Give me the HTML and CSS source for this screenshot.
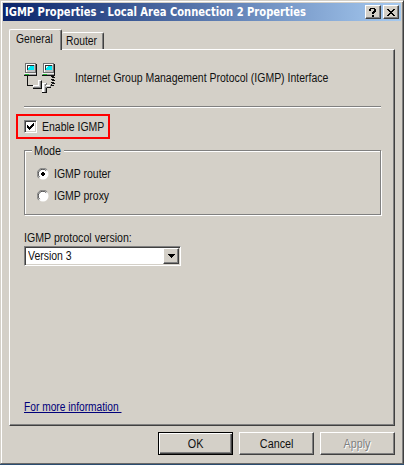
FILE: index.html
```html
<!DOCTYPE html>
<html lang="en">
<head>
<meta charset="utf-8">
<title>IGMP Properties</title>
<link rel="stylesheet" href="styles.css">
</head>
<body>
<div class="window">
  <header class="titlebar">
    <h1><span class="text t-title">IGMP Properties - Local Area Connection 2 Properties</span></h1>
    <button class="caption" aria-label="Help"><svg width="8" height="9" viewBox="0 0 8 9" shape-rendering="crispEdges"><path d="M1 0h5v1h1v3h-1v1h-1v1h-2v-2h1v-1h1v-2h-3v2h-2v-2h1zM3 7h2v2h-2z"/></svg></button>
    <button class="caption" aria-label="Close"><svg width="8" height="7" viewBox="0 0 8 7" shape-rendering="crispEdges"><path d="M0 0h2v1h1v1h2v-1h1v-1h2v1h-1v1h-1v1h-1v1h1v1h1v1h1v1h-2v-1h-1v-1h-2v1h-1v1h-2v-1h1v-1h1v-1h1v-1h-1v-1h-1v-1h-1z"/></svg></button>
  </header>
  <nav class="tabs">
    <div class="tab active"><span class="text t-tab">General</span></div>
    <div class="tab"><span class="text t-tab">Router</span></div>
  </nav>
  <main class="panel">
    <div class="intro">
      <svg width="32" height="32" viewBox="0 0 32 32" shape-rendering="crispEdges">
        <defs>
          <g id="pc">
            <path fill="#707070" d="M1 0h11v10H1z"/>
            <path fill="#fff" d="M2 1h9v8H2z"/>
            <path fill="#c0c0c0" d="M3 2h8v7H3z"/>
            <path fill="#333" d="M3 2h7v1H4v4H3z"/>
            <path fill="#111" d="M12 1h1v9h-1z"/>
            <path fill="#00e8f4" d="M4 3h6v4H4z"/>
            <path fill="#d8ffff" d="M4 3h2v1H5v1H4z"/>
            <path fill="#eee" d="M0 10h12v1H0z"/>
            <path fill="#999" d="M0 11h13v1H0z"/>
            <path fill="#20b030" d="M1 11h4v1H1z"/>
            <path fill="#111" d="M0 12h13v1H0zM12 10h1v3h-1z"/>
          </g>
        </defs>
        <use href="#pc"/><use href="#pc" x="18"/>
        <path fill="#111" d="M3 13h1v9h5v1H3z"/>
        <path fill="#111" d="M28 13h2v1h1v1h-3v1h2v1h1v1h-3v1h2v1h1v1h-3v1h2v1h-4v-1h1v-1h1v-1h-1v-1h1v-2h-1v-1h1v-2h-1v-1h1z"/>
        <path fill="#808080" d="M14 17h4v9h-9v-4h5z"/>
        <path fill="#fff" d="M14 17h3v1h-2v5h-5v1H9v-2h5z"/>
        <path fill="#c8c8c8" d="M10 23h6v1h-6zM15 18h1v5h-1z"/>
        <path fill="#111" d="M9 25h9v1H9zM17 18h1v8h-1z"/>
        <path fill="#808080" d="M19 20h4v2h4v3h-4v5h-4z"/>
        <path fill="#fff" d="M18 20h4v1h-2v8h-2zM22 22h4v1h-4z"/>
        <path fill="#c8c8c8" d="M20 21h1v8h-1zM21 23h5v1h-5z"/>
        <path fill="#111" d="M23 24h4v1h-4zM22 25h1v5h-5v-1h4z"/>
      </svg>
      <span class="text t-intro">Internet Group Management Protocol (IGMP) Interface</span>
    </div>
    <hr>
    <label class="enable">
      <span class="checkbox"><svg width="7" height="7" viewBox="0 0 7 7" shape-rendering="crispEdges"><path d="M0 2h1v1h1v1h1v-1h1v-1h1v-1h1v-1h1v3h-1v1h-1v1h-1v1h-1v1h-1v-1h-1v-1h-1z"/></svg></span>
      <span class="text">Enable IGMP</span>
    </label>
    <fieldset class="mode">
      <legend><span class="text t-mode">Mode</span></legend>
      <label class="option"><svg width="12" height="12" viewBox="0 0 12 12"><circle cx="6" cy="6" r="5.5" fill="#fff"/><path d="M1.8 10.2A5.5 5.5 0 0 1 10.2 1.8" fill="none" stroke="#808080"/><path d="M2.6 9.2A4.6 4.6 0 0 1 9.2 2.6" fill="none" stroke="#404040"/><path d="M5 4h2v1h1v2h-1v1h-2v-1h-1v-2h1z" shape-rendering="crispEdges"/></svg><span class="text">IGMP router</span></label>
      <label class="option"><svg width="12" height="12" viewBox="0 0 12 12"><circle cx="6" cy="6" r="5.5" fill="#fff"/><path d="M1.8 10.2A5.5 5.5 0 0 1 10.2 1.8" fill="none" stroke="#808080"/><path d="M2.6 9.2A4.6 4.6 0 0 1 9.2 2.6" fill="none" stroke="#404040"/></svg><span class="text">IGMP proxy</span></label>
    </fieldset>
    <div class="version"><span class="text t-version">IGMP protocol version:</span></div>
    <div class="combo"><span class="text">Version 3</span><span class="arrow"><svg width="7" height="4" viewBox="0 0 7 4" shape-rendering="crispEdges"><path d="M0 0h7v1h-1v1h-1v1h-1v1h-1v-1h-1v-1h-1v-1h-1z"/></svg></span></div>
    <a class="more"><span class="text t-more">For more information&nbsp;</span></a>
  </main>
  <footer class="actions">
    <button class="btn default"><span class="text t-btn">OK</span></button>
    <button class="btn"><span class="text t-btn">Cancel</span></button>
    <button class="btn disabled"><span class="text t-btn">Apply</span></button>
  </footer>
</div>
</body>
</html>
```
FILE: styles.css
```css
* { box-sizing: border-box; }
body { margin: 0; background: #2b4d72; font: 12px/14px "Liberation Sans", Arial, sans-serif; color: #111; }
svg { display: block; flex: none; }
button { font: inherit; color: inherit; border-radius: 0; padding: 0; margin: 0; }

/* Condensed system lettering */
.text { display: inline-block; white-space: nowrap; transform: scaleX(.873); transform-origin: 0 50%; }
.t-title { transform: scaleX(.953); }
.t-tab { transform: scaleX(.86); }
.t-mode { transform: scaleX(.9); }
.t-version { transform: scaleX(.885); }
.t-more { transform: scaleX(.85); text-decoration: underline; }
.t-btn { transform: scaleX(.9); transform-origin: 50% 50%; }

.window { width: 404px; height: 464px; background: #d4d0c8; border: 1px solid #d4d0c8; border-right-color: #404040; border-bottom-color: #686868; box-shadow: inset 1px 1px #fff, inset -1px 0 #808080; padding: 2px; display: flex; flex-direction: column; }
.titlebar { height: 18px; flex: none; background: linear-gradient(90deg, #0a246a, #a6caf0); display: flex; align-items: center; gap: 2px; padding: 0 2px; }
.titlebar h1 { flex: 1; margin: 0; color: #fff; font: bold 11.65px/18px "DejaVu Sans Condensed", "DejaVu Sans", sans-serif; }
.caption, .arrow { background: #d4d0c8; border: 1px solid; border-color: #fff #404040 #404040 #fff; box-shadow: inset -1px -1px #808080; display: flex; flex: none; align-items: center; justify-content: center; }
.caption { width: 16px; height: 14px; }
.tabs { display: flex; align-items: flex-end; height: 21px; margin: 8px 0 0 6px; flex: none; }
.tab { height: 18px; width: 42px; border: 1px solid #fff; border-right: 1px solid #404040; border-bottom: 0; border-left: 0; box-shadow: inset -1px 0 #808080; border-radius: 2px 2px 0 0; padding: 1px 0 0 4px; }
.tab.active { position: relative; z-index: 1; height: 21px; width: 53px; border-left: 1px solid #fff; background: #d4d0c8; padding: 2px 0 0 6px; }
.panel { width: 386px; height: 377px; flex: none; margin: -1px 0 0 6px; border: 1px solid; border-color: #fff #404040 #404040 #fff; box-shadow: inset -1px -1px #808080; padding: 13px 13px 0 14px; display: flex; flex-direction: column; }
.intro { display: flex; gap: 19px; height: 32px; align-items: center; }
.t-intro { margin-top: -2px; }
hr { width: 357px; height: 2px; border: 0; border-top: 1px solid #808080; border-bottom: 1px solid #fff; margin: 11px 0 6px; flex: none; }
.enable { width: 94px; height: 25px; margin-left: -8px; border: 2px solid #f00; display: flex; align-items: center; gap: 5px; padding-left: 6px; }
.checkbox { flex: none; width: 13px; height: 13px; border: 1px solid; border-color: #808080 #fff #fff #808080; box-shadow: inset 1px 1px #404040, inset -1px -1px #d4d0c8; background: #fff; display: flex; align-items: center; justify-content: center; }
.mode { width: 357px; height: 72px; margin: 4px 0 0; padding: 0 0 0 12px; border: 1px solid #808080; box-shadow: 1px 1px #fff, inset 1px 1px #fff; }
.mode legend { margin-left: -5px; padding: 0 2px; height: 14px; width: 32px; line-height: 16px; background: #d4d0c8; }
.option { display: flex; align-items: center; gap: 5px; height: 22px; }
.mode legend + .option { margin-top: 6px; }
.version { margin-top: 16px; }
.combo { width: 157px; height: 20px; margin-top: 1px; background: #fff; border: 1px solid; border-color: #808080 #fff #fff #808080; box-shadow: inset 1px 1px #404040, inset -1px -1px #d4d0c8; display: flex; justify-content: space-between; align-items: center; padding: 1px 1px 1px 3px; }
.arrow { width: 16px; height: 16px; }
.more { margin: auto 0 11px; color: #00007a; height: 14px; }
.actions { display: flex; gap: 6px; margin: 6px 0 0 155px; }
.btn { width: 75px; height: 23px; background: #d4d0c8; border: 1px solid; border-color: #fff #404040 #404040 #fff; box-shadow: inset -1px -1px #808080; }
.default { border-color: #000; box-shadow: inset 1px 1px #fff, inset -1px -1px #404040, inset -2px -2px #808080; }
.disabled { color: #808080; text-shadow: 1px 1px #fff; }
```
